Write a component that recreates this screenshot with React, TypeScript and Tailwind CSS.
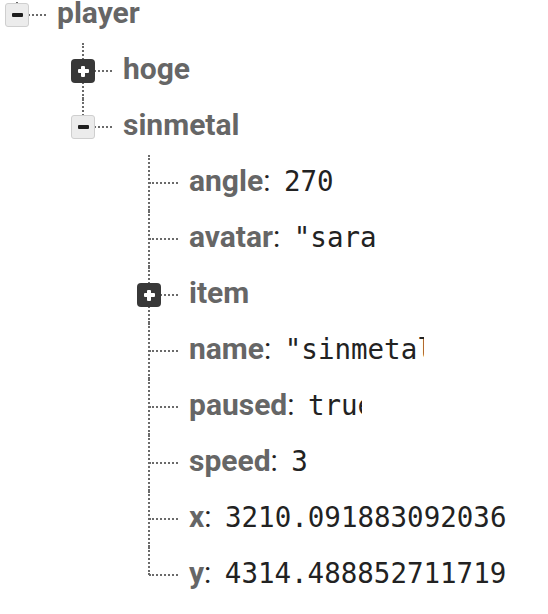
import React from "react";

type BoxKind = "minus" | "plus" | undefined;

function MinusBox() {
  return (
    <span className="relative z-10 flex h-[24px] w-[24px] items-center justify-center rounded-[3px] border border-[#cfcfcf] bg-[#ececec]">
      <span className="h-[4px] w-[11px] rounded-[1px] bg-[#1e1e1e]" />
    </span>
  );
}

function PlusBox() {
  return (
    <span className="relative z-10 flex h-[24px] w-[24px] items-center justify-center rounded-[4px] bg-[#383838]">
      <span className="relative flex h-[11px] w-[11px] items-center justify-center">
        <span className="absolute h-[4px] w-[11px] rounded-[1px] bg-white" />
        <span className="absolute h-[11px] w-[4px] rounded-[1px] bg-white" />
      </span>
    </span>
  );
}

type RowProps = {
  depth: 0 | 1 | 2;
  box?: BoxKind;
  last?: boolean;
  label: string;
  value?: string;
  clip?: string;
};

function Row({ depth, box, last, label, value, clip }: RowProps) {
  const pad = depth === 0 ? "pl-[5px]" : depth === 1 ? "pl-[71px]" : "pl-[137px]";
  return (
    <div className={`flex h-[56px] items-center ${pad}`}>
      <div className="relative flex h-full w-[24px] shrink-0 items-center justify-center">
        <span
          className={`absolute left-[11px] top-0 border-l-2 border-dotted border-[#6a6a6a] ${
            last ? "h-1/2" : "h-full"
          }`}
        />
        <span className="absolute left-[12px] top-[27px] w-[29px] border-t-2 border-dotted border-[#6a6a6a]" />
        {box === "minus" && <MinusBox />}
        {box === "plus" && <PlusBox />}
      </div>
      <div
        className={`ml-[28px] whitespace-nowrap leading-[48px] ${
          clip ? `overflow-hidden ${clip}` : ""
        }`}
      >
        <span className="font-[Roboto,'Liberation_Sans',sans-serif] text-[30px] font-bold text-[#666666]">
          {label}
        </span>
        {value !== undefined && (
          <>
            <span className="font-[Roboto,'Liberation_Sans',sans-serif] text-[30px] text-[#222222]">
              :{" "}
            </span>
            <span className="ml-[6px] font-['DejaVu_Sans_Mono','Liberation_Mono',monospace] text-[27.5px] text-[#222222]">
              {value}
            </span>
          </>
        )}
      </div>
    </div>
  );
}

export default function App() {
  return (
    <div className="h-[614px] w-[548px] overflow-hidden bg-white">
      <div className="-mt-[13px] flex flex-col">
        <Row depth={0} box="minus" last label="player" />
        <Row depth={1} box="plus" label="hoge" />
        <Row depth={1} box="minus" last label="sinmetal" />
        <Row depth={2} label="angle" value="270" />
        <Row depth={2} label="avatar" value={'"sara'} clip="w-[189px]" />
        <Row depth={2} box="plus" label="item" />
        <Row depth={2} label="name" value={'"sinmetal"'} clip="w-[235px]" />
        <Row depth={2} label="paused" value="true" clip="w-[173px]" />
        <Row depth={2} label="speed" value="3" />
        <Row depth={2} label="x" value="3210.091883092036" />
        <Row depth={2} last label="y" value="4314.488852711719" />
      </div>
    </div>
  );
}
